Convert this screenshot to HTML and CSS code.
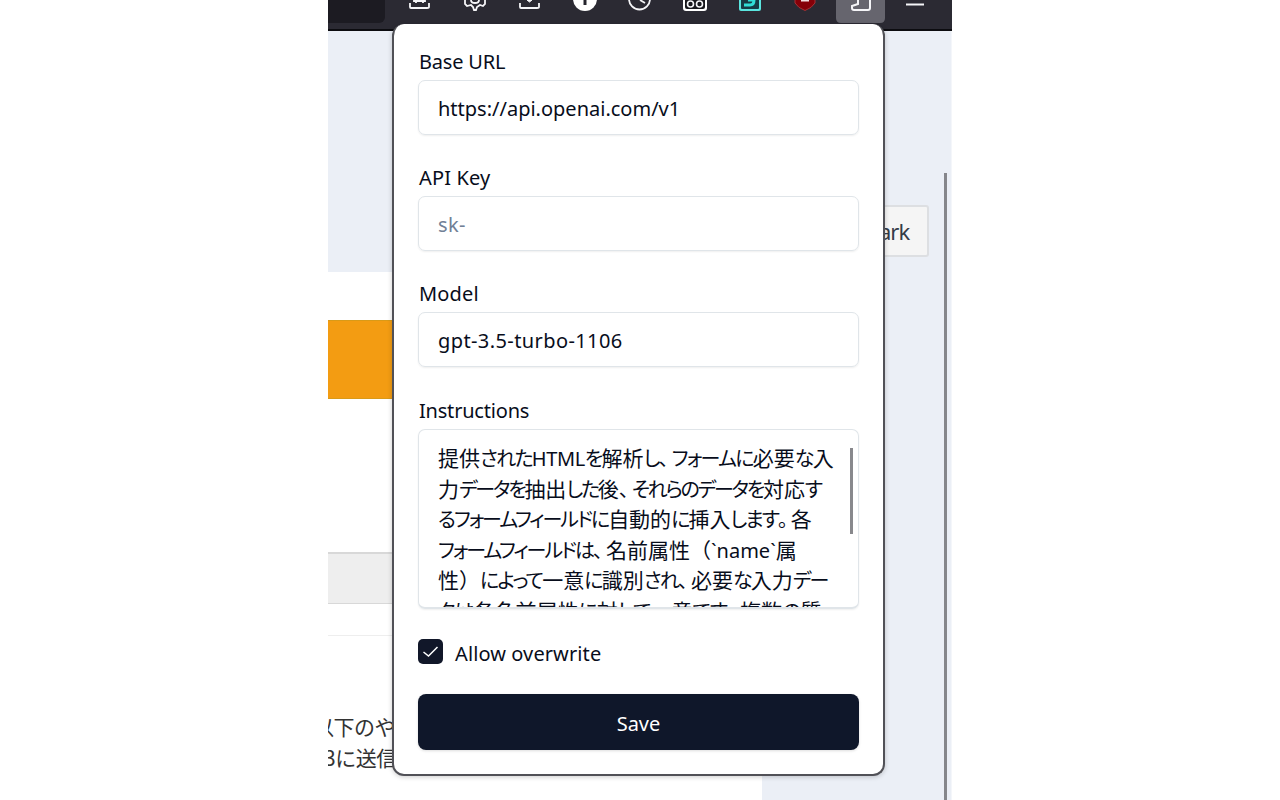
FILE: index.html
```html
<!DOCTYPE html>
<html lang="ja">
<head>
<meta charset="utf-8">
<title>Settings popup</title>
<link rel="stylesheet" href="styles.css">
</head>
<body>
<main class="window">
  <header class="toolbar">
    <div class="address"></div>
    <svg class="icons" width="567" height="29" viewBox="385 0 567 29" fill="none" stroke="#f5f5f8" stroke-width="1.8">
      <path class="active" d="M836 0H885V18Q885 23 880 23H841Q836 23 836 18Z"/>
      <path d="M410 3V7Q410 8 411 8H427Q429 8 429 7V3M414 0V1H425V0M416 1V3M423 1V3"/>
      <path d="M465 0V4L467 6L471 5L473 7L474 10H476L477 7L480 5L483 6L485 4V0M471 0C471 4 479 4 479 0"/>
      <path d="M520 3V7Q520 8 521 8H537Q539 8 539 7V3"/><path d="M527 0H532L529.500 2Z" fill="#f5f5f8" stroke-width="1"/>
      <circle cx="585" cy="-1" r="12" fill="#fff" stroke="none"/><path d="M585 0V5" stroke="#25242c" stroke-width="3"/>
      <circle cx="639.500" cy="-1" r="10.500"/><path d="M640 0L645 3"/>
      <rect x="683" y="-9" width="24" height="20" rx="3" fill="#fff" stroke="none"/><rect x="685" y="-7" width="20" height="16" rx="2" fill="#17171c" stroke="none"/><circle cx="690.500" cy="4" r="3" stroke-width="1.600"/><circle cx="699.500" cy="4" r="3" stroke-width="1.600"/>
      <rect x="739" y="-10" width="22" height="21" rx="2" fill="#5be5df" stroke="none"/><rect x="741" y="-5" width="18" height="14" rx="1" fill="#163c45" stroke="none"/><path d="M744 5H750Q754 5 754 0H748" stroke="#31ded6" stroke-width="3"/>
      <path d="M795 -3H815V3Q812 8 805 10.500Q798 8 795 3Z" fill="#850008" stroke="#a53136" stroke-width="1"/><path d="M801 .500H809" stroke="#f0dfe0" stroke-width="2"/>
      <path d="M858 0V4L852 6V8Q852 10 854 10H868Q870 10 870 8V0" stroke-width="2"/>
      <path d="M906 4.500H924" stroke-width="2"/>
    </svg>
  </header>
  <section class="page">
    <div class="content">
      <div class="hero"></div>
      <div class="orange"></div>
      <div class="grey"></div>
      <div class="rule"></div>
      <div class="article"><p><span class="cut">以</span>下のや</p><p class="second">3に送信</p></div>
    </div>
    <aside class="side"><div class="bookmark">ark</div><div class="scroll"></div></aside>
  </section>
  <form class="popup">
    <label class="field"><span class="label">Base URL</span><span class="input url">https://api.openai.com/v1</span></label>
    <label class="field"><span class="label api">API Key</span><span class="input placeholder">sk-</span></label>
    <label class="field"><span class="label api">Model</span><span class="input model">gpt-3.5-turbo-1106</span></label>
    <div class="field last"><span class="label">Instructions</span>
      <div class="textarea">
        <div class="lines">
          <p class="l1">提供<i>された</i><b>HTML</b><i>を</i>解析<i>し<u>、</u>フォームに</i>必要<i>な</i>入</p>
          <p class="l2">力<i>データを</i>抽出<i>した</i>後<i><u>、</u>それらのデータを</i>対応<i>す</i></p>
          <p class="l3"><i>るフォームフィールドに</i>自動的<i>に</i>挿入<i>します<u>。</u></i>各</p>
          <p class="l4"><i>フォームフィールドは<u>、</u></i>名前属性（<b>`name`</b>属</p>
          <p class="l5">性）<i>によって</i>一意<i>に</i>識別<i>され<u>、</u></i>必要<i>な</i>入力<i>デー</i></p>
          <p class="l6"><i>タは</i>各名前属性<i>に</i>対<i>して</i>一意<i>です<u>。</u></i>複数<i>の</i>質</p>
        </div>
        <div class="thumb"></div>
      </div>
    </div>
    <div class="check"><span class="box"><svg width="25" height="25" viewBox="0 0 25 25" fill="none" stroke="#fff" stroke-width="1.500"><path d="M5.500 13L10.500 17L19.500 8"/></svg></span><span class="allow">Allow overwrite</span></div>
    <div class="save"><span>Save</span></div>
  </form>
</main>
</body>
</html>
```
FILE: styles.css
```css
* { box-sizing: border-box; }
body { margin: 0; background: #fff; color: #080d1b; font: 20px/28px "Noto Sans", "Noto Sans CJK JP", sans-serif; }
p { margin: 0; }
.window { position: relative; width: 624px; height: 800px; margin-left: 328px; overflow: hidden; }
.toolbar { display: flex; height: 31px; background: #2b2a33; border-bottom: 2px solid #0c0c10; }
.address { width: 57px; height: 23px; background: #1c1b22; border-radius: 0 0 6px 0; }
.icons { display: block; }
.active { fill: #66656e; stroke: none; }
.page { display: flex; height: 769px; }
.content { width: 434px; }
.hero { height: 241px; background: #ebeff6; }
.orange { height: 79px; margin-top: 48px; background: #f39c12; border: 1px solid #d99a18; border-width: 1px 0; }
.grey { height: 52px; margin-top: 153px; background: #eee; border: 1px solid #d8d8d8; border-width: 2px 0 1px; }
.rule { height: 1px; margin-top: 31px; background: #eee; }
.article { margin-top: 75px; font: 21px/31px "Noto Sans CJK JP", sans-serif; color: #333; white-space: nowrap; letter-spacing: -.5px; }
.cut { margin-left: -15px; }
.second { margin-left: -4px; }
.side { display: flex; justify-content: space-between; width: 190px; background: #ebeff6; border-right: 1px solid #f4f6fa; }
.bookmark { width: 60px; height: 52px; margin: 174px 0 0 107px; padding-left: 8px; background: #f5f5f5; border: 2px solid #dddfe2; border-radius: 3px; color: #343b48; font-size: 22px; line-height: 48px; letter-spacing: -1px; }
.scroll { width: 3px; margin: 142px 4px 0 0; background: #85868b; }
.popup { position: absolute; left: 64px; top: 24px; width: 493px; height: 752px; padding: 24px 24px 24px 24px; background: #fff; border: 2px solid #515157; border-top: 0 solid #515157; border-radius: 12px; padding-top: 25px; box-shadow: 0 1px 5px #0003; }
.field { display: block; height: 116px; }
.last { height: 212px; }
.label { display: block; width: max-content; height: 31px; padding-left: 1px; line-height: 25px; letter-spacing: -.2px; }
.api { letter-spacing: .15px; }
.input { display: flex; align-items: center; height: 55px; padding: 3px 19px 0; border: 1px solid #e0e5e9; border-radius: 7px; box-shadow: 0 1px 2px #0001; }
.placeholder { color: #718096; letter-spacing: .4px; }
.model { letter-spacing: .4px; }
.last { padding-top: 1px; }
.textarea { position: relative; height: 180px; padding: 12px 19px 0; overflow: hidden; border: 1px solid #e0e5e9; border-bottom-width: 2px; border-radius: 7px; box-shadow: 0 1px 2px #0001; }
.lines { font: 21px/30.500px "Noto Sans CJK JP", sans-serif; white-space: nowrap; }
.lines p { height: 30.500px; }
.lines i { font-size: 20px; font-style: normal; font-feature-settings: "palt"; }
.lines u { text-decoration: none; letter-spacing: 3px; }
.lines b { font: 20px/28px "Noto Sans", sans-serif; letter-spacing: -.4px; }
.l1 i { letter-spacing: -1.700px; }
.l2 i { letter-spacing: -2.250px; }
.l3 i { letter-spacing: -2px; }
.l4 i { letter-spacing: -2px; }
.l4 b { letter-spacing: 0; }
.l5 i { letter-spacing: -1.800px; }
.l6 i { letter-spacing: -1px; }
.thumb { position: absolute; right: 5px; top: 18px; width: 3px; height: 86px; background: #88888c; }
.check { display: flex; align-items: flex-start; gap: 12px; height: 28px; margin-top: 30px; margin-bottom: 27px; }
.box { width: 25px; height: 25px; background: #111729; border-radius: 5px; }
.box svg { display: block; }
.allow { padding-top: 1px; letter-spacing: .1px; }
.save { display: flex; align-items: center; justify-content: center; height: 56px; padding-top: 4px; background: #0f172a; color: #fff; border-radius: 8px; box-shadow: 0 1px 3px #0002; }
```
